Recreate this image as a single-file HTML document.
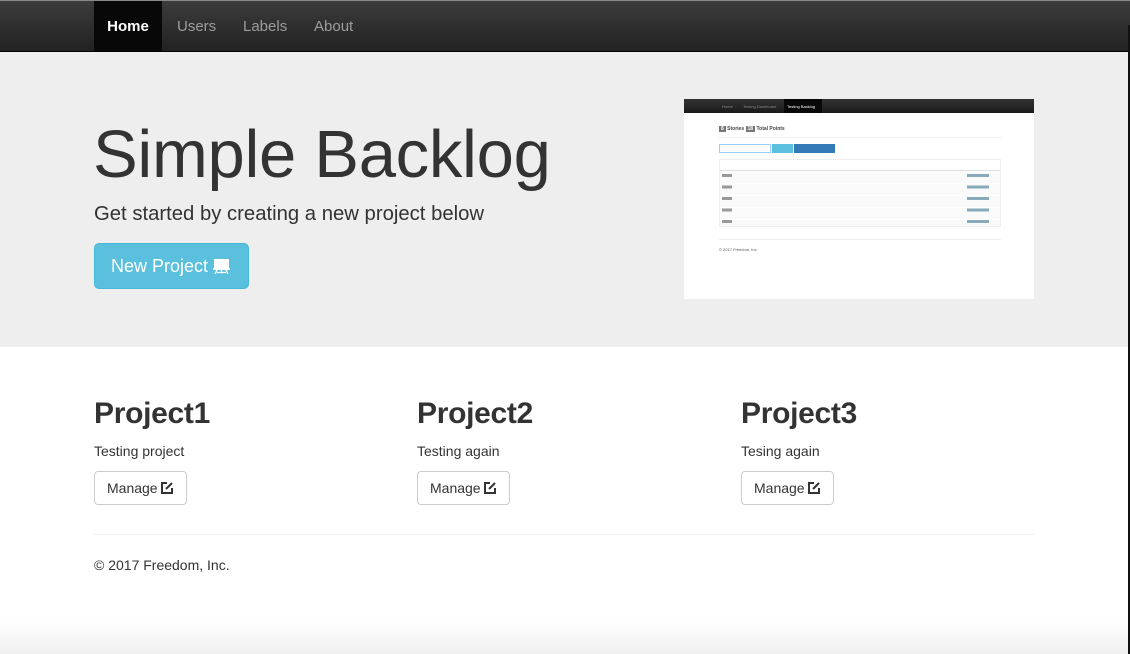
<!DOCTYPE html>
<html><head><style>
*{box-sizing:border-box;margin:0;padding:0}
body{width:1130px;height:654px;overflow:hidden;font-family:"Liberation Sans",Helvetica,Arial,sans-serif;color:#333;background:#fff;position:relative}
.nav{position:absolute;left:0;top:0;width:1130px;height:52px;background:linear-gradient(#3c3c3c,#222);border-top:1px solid #888;border-bottom:1px solid #000}
.nav a{position:absolute;top:0;height:50px;line-height:52px;font-size:15px;color:#9d9d9d;text-decoration:none}
.nav .act{background:#080808;color:#fff;left:94px;width:68px;text-align:center}
.hero{position:absolute;left:0;top:52px;width:1130px;height:295px;background:#eee}
h1{position:absolute;left:93px;top:116px;font-size:67px;font-weight:normal;color:#333;letter-spacing:-0.3px}
.sub{position:absolute;left:94px;top:203px;font-size:20.3px;color:#333}
.np{position:absolute;left:94px;top:243px;width:155px;height:46px;background:#5bc0de;border:1px solid #46b8da;border-radius:5px;color:#fff;font-size:18px;line-height:44px;padding-left:16px}
.shot{position:absolute;left:684px;top:99px;width:350px;height:200px;background:#fff;overflow:hidden;font-size:4px;color:#555}
.col{position:absolute;top:397px}
.col h2{font-size:30px;font-weight:bold;color:#333;letter-spacing:-0.3px}
.col p{font-size:14px;margin-top:12px}
.btn{display:inline-block;margin-top:12px;height:34px;border:1px solid #ccc;border-radius:4px;padding:0 12px;line-height:32px;font-size:14px;color:#333}
.btn svg{vertical-align:-2px;margin-left:2px}
hr{position:absolute;left:94px;top:534px;width:940px;border:0;border-top:1px solid #eee}
.foot{position:absolute;left:94px;top:557px;font-size:14px}
.edge{position:absolute;right:0;top:25px;width:2px;height:629px;background:#111}
.shade{position:absolute;left:0;top:620px;width:1128px;height:34px;background:linear-gradient(rgba(0,0,0,0),rgba(0,0,0,0.06))}
</style></head><body>
<div class="nav">
<a class="act" style="font-weight:bold">Home</a>
<a style="left:177px">Users</a>
<a style="left:243px">Labels</a>
<a style="left:314px">About</a>
</div>
<div class="hero"></div>
<h1>Simple Backlog</h1>
<div class="sub">Get started by creating a new project below</div>
<div class="np">New Project <svg width="17" height="16" viewBox="0 0 17 16" style="vertical-align:-2px"><rect x="1" y="1" width="15" height="9" fill="#fff"/><rect x="0" y="10" width="17" height="2" fill="#fff"/><path d="M4 12l-2 4M13 12l2 4M8.5 12v3M4 14.5h9" stroke="#fff" stroke-width="1.3" fill="none"/></svg></div>
<div class="shot">
<div style="height:14px;background:linear-gradient(#333,#1a1a1a);position:relative">
<span style="position:absolute;left:38px;top:5px;color:#888">Home</span><span style="position:absolute;left:59px;top:5px;color:#888">Testing Dashboard</span>
<span style="position:absolute;left:100px;top:0;height:14px;width:38px;background:#080808;color:#fff;padding:5px 3px">Testing Backlog</span></div>
<div style="position:absolute;left:35px;top:27px;font-weight:bold;font-size:5px;color:#444"><span style="background:#777;color:#fff;padding:0 2px">8</span> Stories <span style="background:#777;color:#fff;padding:0 2px">18</span> Total Points</div>
<div style="position:absolute;left:35px;top:38px;width:282px;border-top:1px solid #eee"></div>
<div style="position:absolute;left:35px;top:45px;width:52px;height:9px;border:1px solid #9cf"></div>
<div style="position:absolute;left:88px;top:45px;width:21px;height:9px;background:#5bc0de"></div>
<div style="position:absolute;left:110px;top:45px;width:41px;height:9px;background:#337ab7"></div>
<div style="position:absolute;left:35px;top:60px;width:282px;height:68px;border:1px solid #eee;background:repeating-linear-gradient(#fafafa 0 11px,#fff 11px 12px)">
<div style="height:11px;background:#fff;border-bottom:1px solid #ddd"></div>
<div style="position:absolute;left:2px;top:14px;width:10px;height:50px;background:repeating-linear-gradient(#999 0 3px,transparent 3px 11.5px)"></div>
<div style="position:absolute;left:247px;top:14px;width:22px;height:50px;background:repeating-linear-gradient(#8ab 0 3px,transparent 3px 11.5px)"></div>
</div>
<div style="position:absolute;left:35px;top:140px;width:282px;border-top:1px solid #eee"></div>
<div style="position:absolute;left:35px;top:148px">© 2017 Freedom, Inc.</div>
</div>
<div class="col" style="left:94px"><h2>Project1</h2><p>Testing project</p><span class="btn">Manage<svg width="14" height="14" viewBox="0 0 14 14"><path d="M7 2H2v10h10V7" stroke="#333" stroke-width="2" fill="none"/><path d="M6 8l6-6" stroke="#333" stroke-width="2"/></svg></span></div>
<div class="col" style="left:417px"><h2>Project2</h2><p>Testing again</p><span class="btn">Manage<svg width="14" height="14" viewBox="0 0 14 14"><path d="M7 2H2v10h10V7" stroke="#333" stroke-width="2" fill="none"/><path d="M6 8l6-6" stroke="#333" stroke-width="2"/></svg></span></div>
<div class="col" style="left:741px"><h2>Project3</h2><p>Tesing again</p><span class="btn">Manage<svg width="14" height="14" viewBox="0 0 14 14"><path d="M7 2H2v10h10V7" stroke="#333" stroke-width="2" fill="none"/><path d="M6 8l6-6" stroke="#333" stroke-width="2"/></svg></span></div>
<hr>
<div class="foot">© 2017 Freedom, Inc.</div>
<div class="shade"></div>
<div class="edge"></div>
</body></html>
